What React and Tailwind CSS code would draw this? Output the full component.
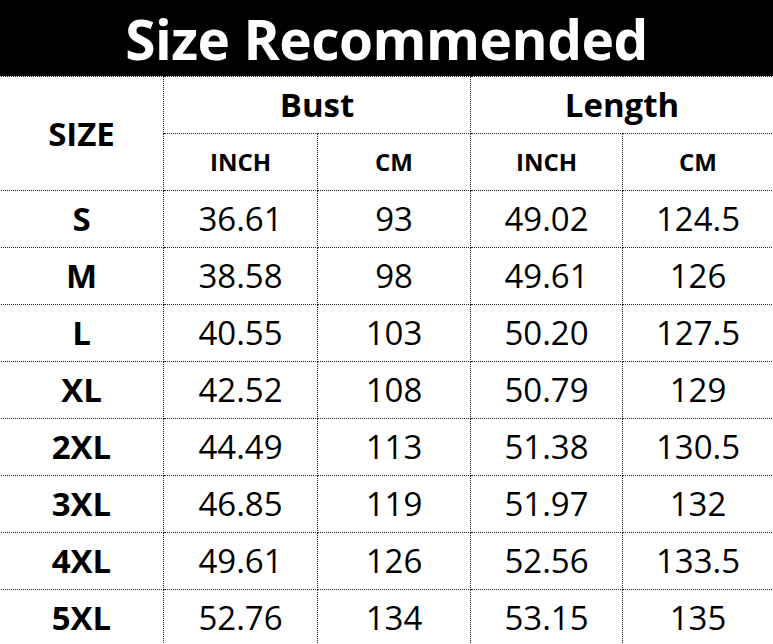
const rows = [
  ["S", "36.61", "93", "49.02", "124.5"],
  ["M", "38.58", "98", "49.61", "126"],
  ["L", "40.55", "103", "50.20", "127.5"],
  ["XL", "42.52", "108", "50.79", "129"],
  ["2XL", "44.49", "113", "51.38", "130.5"],
  ["3XL", "46.85", "119", "51.97", "132"],
  ["4XL", "49.61", "126", "52.56", "133.5"],
  ["5XL", "52.76", "134", "53.15", "135"],
];

const cell = "border border-dotted border-[#222] text-center align-middle p-0";

export default function App() {
  return (
    <div
      className="w-[773px] h-[644px] overflow-hidden bg-white text-black"
      style={{ fontFamily: '"Open Sans", "Noto Sans", sans-serif' }}
    >
      <div className="h-[76px] bg-black flex items-center justify-center">
        <h1 className="text-white font-bold text-[55px] leading-none tracking-[-0.5px]">
          Size Recommended
        </h1>
      </div>
      <table className="w-[774px] table-fixed border-collapse -ml-px">
        <colgroup>
          <col className="w-[164px]" />
          <col className="w-[154px]" />
          <col className="w-[153px]" />
          <col className="w-[152px]" />
          <col className="w-[151px]" />
        </colgroup>
        <thead>
          <tr className="h-[57px]">
            <th rowSpan={2} className={`${cell} text-[33px] font-bold`}>
              SIZE
            </th>
            <th colSpan={2} className={`${cell} text-[33px] font-bold`}>
              Bust
            </th>
            <th colSpan={2} className={`${cell} text-[33px] font-bold`}>
              Length
            </th>
          </tr>
          <tr className="h-[57px]">
            <th className={`${cell} text-[24px] font-bold`}>INCH</th>
            <th className={`${cell} text-[24px] font-bold`}>CM</th>
            <th className={`${cell} text-[24px] font-bold`}>INCH</th>
            <th className={`${cell} text-[24px] font-bold`}>CM</th>
          </tr>
        </thead>
        <tbody>
          {rows.map((r) => (
            <tr key={r[0]} className="h-[57px]">
              <td className={`${cell} text-[33px] font-bold`}>{r[0]}</td>
              {r.slice(1).map((v, i) => (
                <td key={i} className={`${cell} text-[33px]`}>
                  {v}
                </td>
              ))}
            </tr>
          ))}
        </tbody>
      </table>
    </div>
  );
}
